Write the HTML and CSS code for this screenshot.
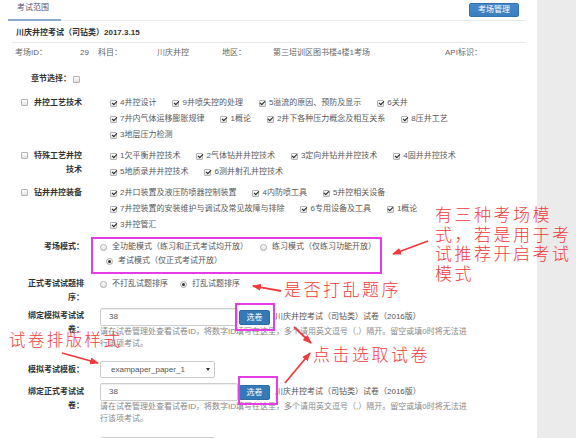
FILE: index.html
```html
<!DOCTYPE html>
<html lang="zh-CN">
<head>
<meta charset="utf-8">
<title>考试范围</title>
<link rel="stylesheet" href="styles.css">
</head>
<body>
<div class="page">
  <main class="panel">
    <div class="tabs">
      <span class="tab">考试范围</span>
      <button class="btn-manage" type="button">考场管理</button>
    </div>
    <h1 class="title">川庆井控考试（司钻类）2017.3.15</h1>
    <div class="info">
      <span>考场ID：</span><span>29</span><span>科目：</span><span>川庆井控</span><span>地区：</span><span>第三培训区图书楼4楼1考场</span><span>API标识：</span>
    </div>
    <div class="chapter"><span>章节选择：</span><span class="cb"></span></div>

    <div class="sections">
      <div class="sec">
        <div class="sec-head"><span class="cb"></span><span class="sec-name">井控工艺技术</span></div>
        <div class="items">
          <span class="item"><span class="cb on"></span>4井控设计</span>
          <span class="item"><span class="cb on"></span>9井喷失控的处理</span>
          <span class="item"><span class="cb on"></span>5溢流的原因、预防及显示</span>
          <span class="item"><span class="cb on"></span>6关井</span>
          <span class="item"><span class="cb on"></span>7井内气体运移膨胀规律</span>
          <span class="item"><span class="cb on"></span>1概论</span>
          <span class="item"><span class="cb on"></span>2井下各种压力概念及相互关系</span>
          <span class="item"><span class="cb on"></span>8压井工艺</span>
          <span class="item"><span class="cb on"></span>3地层压力检测</span>
        </div>
      </div>
      <div class="sec">
        <div class="sec-head"><span class="cb"></span><span class="sec-name">特殊工艺井控<br>技术</span></div>
        <div class="items">
          <span class="item"><span class="cb on"></span>1欠平衡井控技术</span>
          <span class="item"><span class="cb on"></span>2气体钻井井控技术</span>
          <span class="item"><span class="cb on"></span>3定向井钻井井控技术</span>
          <span class="item"><span class="cb on"></span>4固井井控技术</span>
          <span class="item"><span class="cb on"></span>5地质录井井控技术</span>
          <span class="item"><span class="cb on"></span>6测井射孔井控技术</span>
        </div>
      </div>
      <div class="sec">
        <div class="sec-head"><span class="cb"></span><span class="sec-name">钻井井控装备</span></div>
        <div class="items">
          <span class="item"><span class="cb on"></span>2井口装置及液压防喷器控制装置</span>
          <span class="item"><span class="cb on"></span>4内防喷工具</span>
          <span class="item"><span class="cb on"></span>5井控相关设备</span>
          <span class="item"><span class="cb on"></span>7井控装置的安装维护与调试及常见故障与排除</span>
          <span class="item"><span class="cb on"></span>6专用设备及工具</span>
          <span class="item"><span class="cb on"></span>1概论</span>
          <span class="item"><span class="cb on"></span>3井控管汇</span>
        </div>
      </div>
    </div>

    <div class="frow mode">
      <div class="flabel">考场模式：</div>
      <div class="fctrl radios">
        <span class="radio"><span class="rd"></span>全功能模式（练习和正式考试均开放）</span>
        <span class="radio"><span class="rd"></span>练习模式（仅练习功能开放）</span>
        <span class="radio"><span class="rd on"></span>考试模式（仅正式考试开放）</span>
      </div>
    </div>

    <div class="frow order">
      <div class="flabel">正式考试试题排<br>序：</div>
      <div class="fctrl radios">
        <span class="radio"><span class="rd"></span>不打乱试题排序</span>
        <span class="radio"><span class="rd on"></span>打乱试题排序</span>
      </div>
    </div>

    <div class="frow bind bind1">
      <div class="flabel">绑定模拟考试试<br>卷：</div>
      <div class="fctrl">
        <div class="inline">
          <div class="input">38</div>
          <button class="btn-pick" type="button">选卷</button>
          <span class="paper-name">川庆井控考试（司钻类）试卷（2016版）</span>
        </div>
        <p class="help">请在试卷管理处查看试卷ID，将数字ID填写在这里，多个请用英文逗号（,）隔开。留空或填0时将无法进<br>行该项考试。</p>
      </div>
    </div>

    <div class="frow tpl">
      <div class="flabel">模拟考试模板：</div>
      <div class="fctrl">
        <div class="select"><span>exampaper_paper_1</span><span class="caret"></span></div>
      </div>
    </div>

    <div class="frow bind bind2">
      <div class="flabel">绑定正式考试试<br>卷：</div>
      <div class="fctrl">
        <div class="inline">
          <div class="input">38</div>
          <button class="btn-pick" type="button">选卷</button>
          <span class="paper-name">川庆井控考试（司钻类）试卷（2016版）</span>
        </div>
        <p class="help">请在试卷管理处查看试卷ID，将数字ID填写在这里，多个请用英文逗号（,）隔开。留空或填0时将无法进<br>行该项考试。</p>
      </div>
    </div>

    <div class="frow more">
      <div class="flabel"></div>
      <div class="fctrl"><div class="input short"></div></div>
    </div>
  </main>
  <aside class="side"></aside>

  <div class="hl hl-mode"></div>
  <div class="hl hl-pick1"></div>
  <div class="hl hl-pick2"></div>

  <p class="note note-mode">有三种考场模<br>式，若是用于考<br>试推荐开启考试<br>模式</p>
  <p class="note note-order">是否打乱题序</p>
  <p class="note note-tpl">试卷排版样式</p>
  <p class="note note-pick">点击选取试卷</p>

  <svg class="arrows" width="576" height="438" viewBox="0 0 576 438">
    <defs>
      <marker id="ah" markerWidth="9" markerHeight="7" refX="8" refY="3.5" orient="auto" markerUnits="userSpaceOnUse">
        <path d="M0,0 L9,3.5 L0,7 Z" fill="#f23a3a"/>
      </marker>
    </defs>
    <g stroke="#f23a3a" stroke-width="1.8" fill="none" marker-end="url(#ah)">
      <line x1="428" y1="241" x2="393" y2="254"/>
      <line x1="281" y1="291" x2="253" y2="286"/>
      <line x1="62" y1="353" x2="98" y2="363"/>
      <line x1="294" y1="327" x2="311" y2="343"/>
      <line x1="285" y1="383" x2="310" y2="353"/>
    </g>
  </svg>
</div>
</body>
</html>
```

FILE: styles.css
```css
* { box-sizing: border-box; }
html, body { margin: 0; padding: 0; }
body {
  font-family: "Liberation Sans", "Noto Sans CJK SC", sans-serif;
  font-size: 8px;
  color: #555;
  background: #fff;
}
.page {
  position: relative;
  display: flex;
  width: 576px;
  height: 438px;
  overflow: hidden;
}
.panel {
  width: 537px;
  flex: none;
  padding: 0 12px 0 8px;
  background: #fff;
}
.side { flex: 1; background: #ebebeb; }

/* tabs */
.tabs {
  display: flex;
  height: 21px;
  border-bottom: 1px solid #e8e8e8;
}
.tab {
  height: 21px;
  margin-bottom: -1px;
  padding: 0 12px 3px 9px;
  line-height: 16px;
  color: #557;
  border-bottom: 2px solid #89aacd;
}
.btn-manage {
  margin: 3px 6px 0 auto;
  height: 14px;
  padding: 0 8px;
  border: 1px solid #3070ae;
  border-radius: 2px;
  background: linear-gradient(#4589c9, #3a7ebf);
  color: #fff;
  font: inherit;
  line-height: 12px;
}

.title {
  margin: 0 0 0 4px;
  padding: 5px 0 2px 4px;
  font-size: 8px;
  font-weight: bold;
  line-height: 14px;
  color: #333;
  border-bottom: 1px solid #e8e8e8;
}

.info {
  display: grid;
  grid-template-columns: 65px 18px 59px 65px 51px 172px auto;
  margin-top: 2px;
  padding-left: 7px;
  line-height: 16px;
  color: #666;
  white-space: nowrap;
}

.chapter {
  display: flex;
  align-items: center;
  gap: 2px;
  margin-top: 10px;
  padding-left: 23px;
  line-height: 16px;
  font-weight: bold;
  color: #333;
}

/* checkbox & radio */
.cb {
  position: relative;
  display: inline-block;
  flex: none;
  width: 7px;
  height: 7px;
  border: 1px solid #b3b3b3;
  border-radius: 1px;
  background: linear-gradient(#fff, #e2e2e2);
}
.cb.on::after {
  content: "";
  position: absolute;
  left: 1.5px;
  top: -0.5px;
  width: 2px;
  height: 4px;
  border: solid #222;
  border-width: 0 1.4px 1.4px 0;
  transform: rotate(45deg);
}
.rd {
  position: relative;
  display: inline-block;
  flex: none;
  width: 7px;
  height: 7px;
  border: 1px solid #aaa;
  border-radius: 50%;
  background: linear-gradient(#fff, #e4e4e4);
}
.rd.on::after {
  content: "";
  position: absolute;
  left: 1px;
  top: 1px;
  width: 3px;
  height: 3px;
  border-radius: 50%;
  background: #333;
}

/* sections */
.sections { margin-top: 8px; }
.sec { display: flex; align-items: flex-start; }
.sec + .sec { margin-top: 5px; }
.sec-head {
  flex: 0 0 102px;
  display: flex;
  align-items: flex-start;
  padding-left: 13px;
}
.sec-head .cb { margin-top: 4px; }
.sec-name {
  width: 49px;
  margin-left: 5px;
  padding-top: 1px;
  text-align: right;
  font-weight: bold;
  color: #333;
  line-height: 14px;
  white-space: nowrap;
}
.items {
  width: 355px;
  display: flex;
  flex-wrap: wrap;
  column-gap: 16px;
  line-height: 16px;
  color: #5a5a5a;
}
.item {
  display: inline-flex;
  align-items: center;
  gap: 3px;
  white-space: nowrap;
}

/* form rows */
.frow { display: flex; align-items: flex-start; }
.flabel {
  flex: 0 0 63px;
  margin-left: 13px;
  text-align: right;
  font-weight: bold;
  color: #333;
  line-height: 14px;
  white-space: nowrap;
}
.fctrl { margin-left: 16px; width: 380px; }

.radios {
  display: flex;
  flex-wrap: wrap;
  line-height: 14px;
}
.radio {
  display: inline-flex;
  align-items: center;
  gap: 5px;
  margin-right: 6px;
  white-space: nowrap;
}
.radio + .radio { margin-left: 6px; }

.mode { margin-top: 7px; }
.order { margin-top: 9px; }
.bind1 { margin-top: 3px; }
.bind1 .flabel { padding-top: 1px; }
.tpl { margin-top: 11px; }
.tpl .flabel { padding-top: 2px; }
.bind2 { margin-top: 5px; }
.bind2 .flabel { padding-top: 2px; }
.more { margin-top: 12px; }

.inline { display: flex; align-items: flex-start; }
.input {
  width: 138px;
  height: 18px;
  padding-left: 8px;
  border: 1px solid #ccc;
  border-radius: 2px;
  line-height: 16px;
  color: #555;
  box-shadow: inset 0 1px 1px rgba(0, 0, 0, 0.07);
}
.input.short { width: 115px; }
.btn-pick {
  margin: 2px 0 0 1px;
  width: 31px;
  height: 15px;
  padding: 0;
  border: 1px solid #2e6da4;
  border-radius: 2px;
  background: #337ab7;
  color: #fff;
  font: inherit;
  line-height: 13px;
}
.paper-name {
  margin-left: 5px;
  line-height: 18px;
  white-space: nowrap;
  color: #555;
}
.help {
  margin: 0;
  line-height: 12px;
  color: #888;
  white-space: nowrap;
}
.select {
  display: flex;
  align-items: center;
  justify-content: space-between;
  width: 115px;
  height: 17px;
  padding: 0 4px 0 10px;
  border: 1px solid #ccc;
  border-radius: 2px;
  line-height: 15px;
  color: #555;
}
.caret {
  width: 0;
  height: 0;
  border-left: 2px solid transparent;
  border-right: 2px solid transparent;
  border-top: 3px solid #333;
}

/* annotations */
.hl {
  position: absolute;
  border: 2px solid #e63ce6;
}
.hl-mode { left: 91px; top: 237px; width: 291px; height: 37px; }
.hl-pick1 { left: 235px; top: 303px; width: 40px; height: 28px; }
.hl-pick2 { left: 238px; top: 376px; width: 40px; height: 29px; }

.note {
  position: absolute;
  margin: 0;
  font-family: "Noto Sans CJK SC", sans-serif;
  font-size: 17px;
  font-weight: 300;
  letter-spacing: 2.5px;
  line-height: 19.5px;
  color: #f23a3a;
  white-space: nowrap;
}
.note-mode { left: 435px; top: 204px; }
.note-order { left: 284px; top: 279px; }
.note-tpl { left: 9px; top: 330px; font-size: 16.5px; letter-spacing: 2.4px; }
.note-pick { left: 313px; top: 344px; }

.arrows {
  position: absolute;
  left: 0;
  top: 0;
  pointer-events: none;
}
```
